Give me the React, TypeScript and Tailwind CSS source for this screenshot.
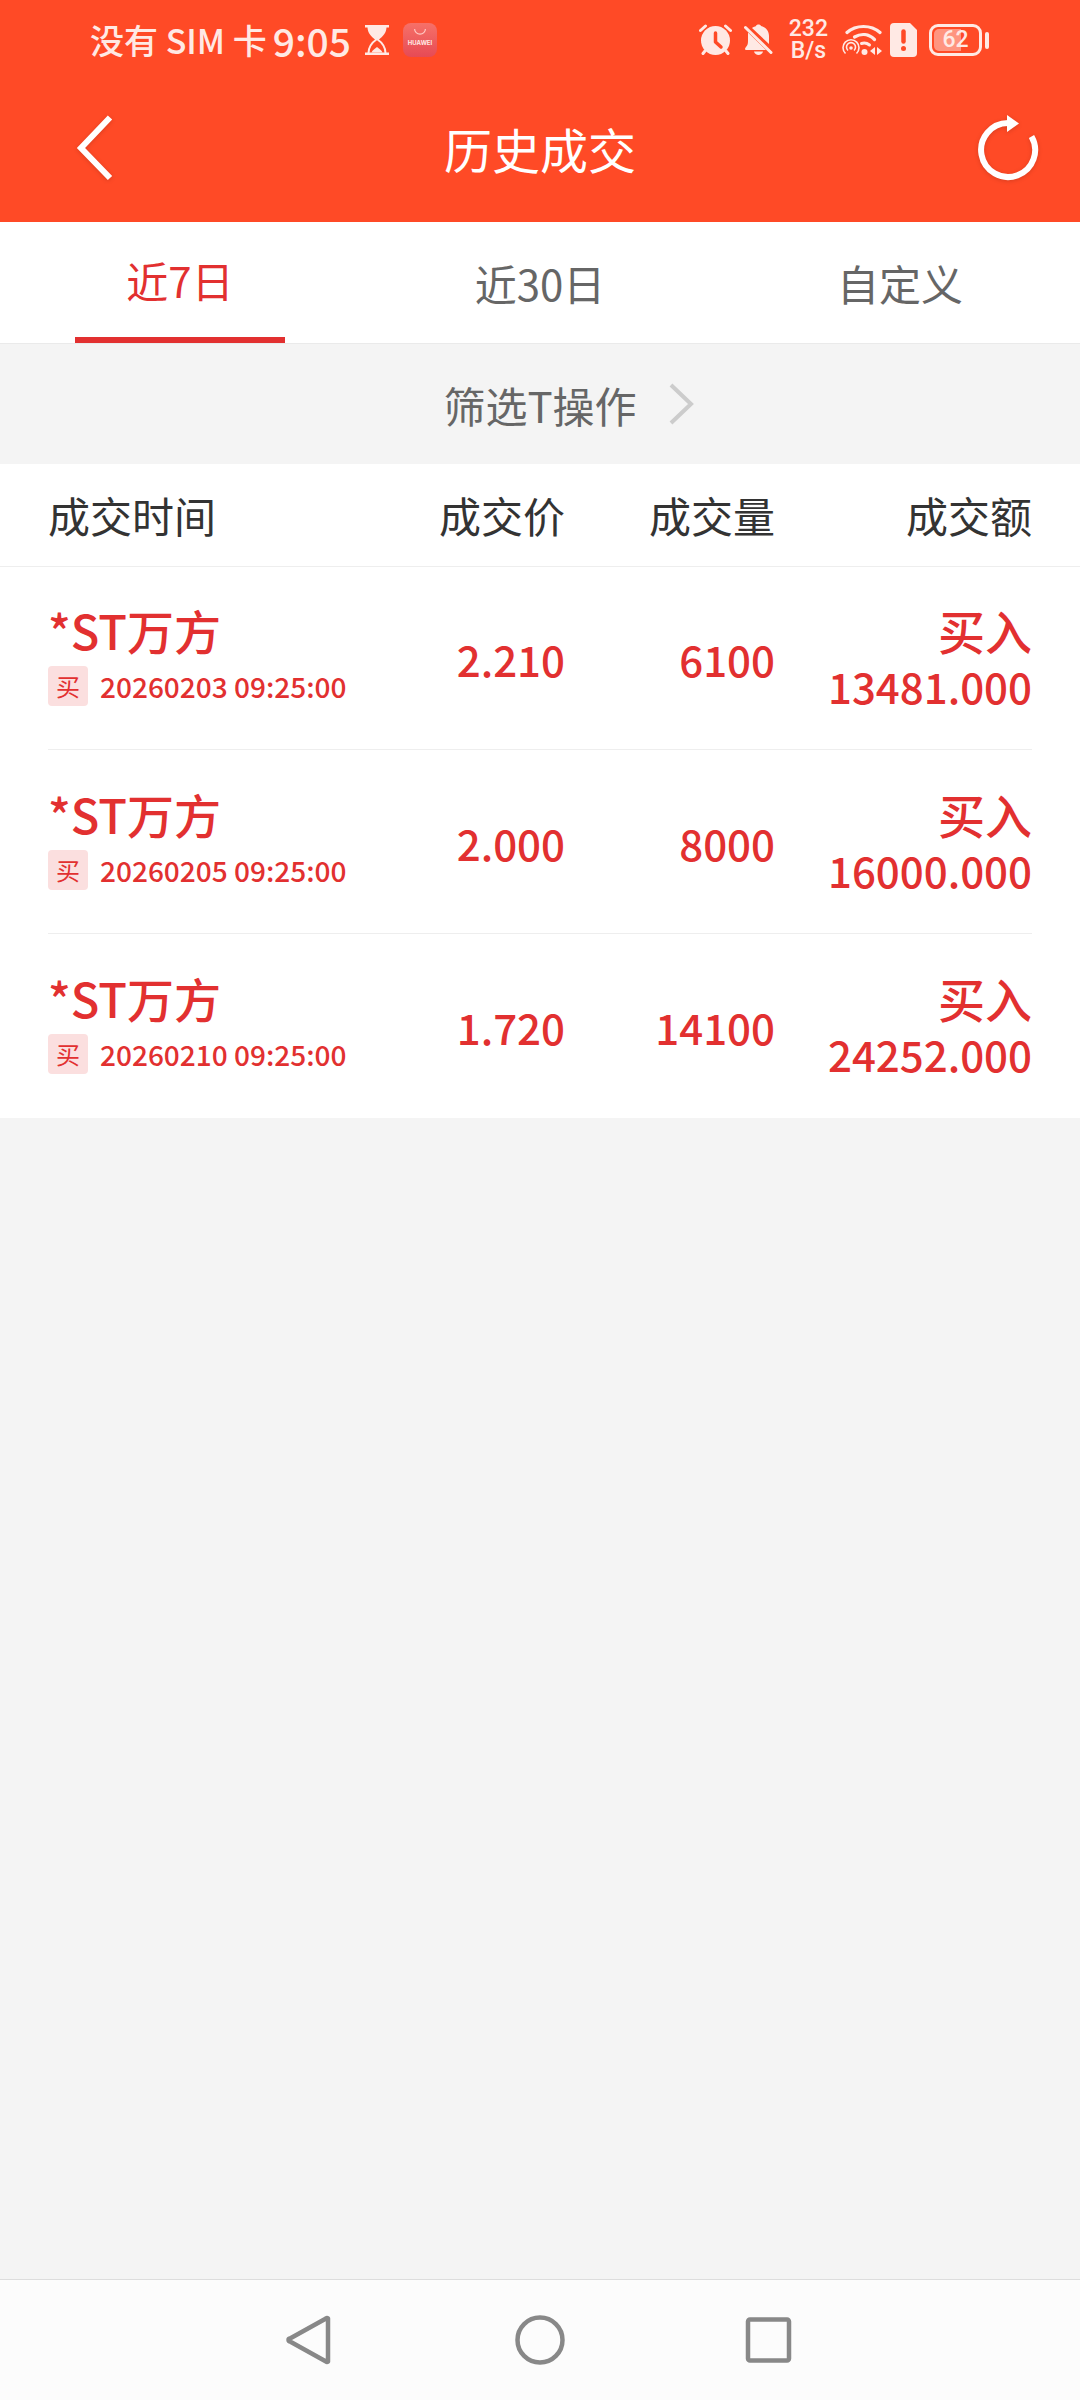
import { useState } from "react";

type Deal = {
  name: string;
  time: string;
  price: string;
  volume: string;
  amount: string;
};

const deals: Deal[] = [
  { name: "*ST万方", time: "20260203 09:25:00", price: "2.210", volume: "6100", amount: "13481.000" },
  { name: "*ST万方", time: "20260205 09:25:00", price: "2.000", volume: "8000", amount: "16000.000" },
  { name: "*ST万方", time: "20260210 09:25:00", price: "1.720", volume: "14100", amount: "24252.000" },
];

const tabs = ["近7日", "近30日", "自定义"];

function StatusBar() {
  return (
    <div className="flex h-20 items-center justify-between pr-[91px] pl-[90px] text-[#ffe9e4]">
      <div className="flex items-center font-medium">
        <span className="text-[34px] leading-10">没有 SIM 卡</span>
        <span className="ml-1.5 text-[39px] leading-10">9:05</span>
        <svg className="ml-3.5 h-[30px] w-6" viewBox="0 0 24 30" fill="none">
          <path d="M0 0h24v2.500H0zM0 27.500h24V30H0z" fill="currentColor" />
          <path d="M2.500 2h19c0 6-3.500 9-8 13h-3C6 11 2.500 8 2.500 2z" fill="currentColor" />
          <path d="M12 14c-5 3.500-8.500 7-8.500 14M12 14c5 3.500 8.500 7 8.500 14" stroke="currentColor" strokeWidth="2" />
          <path d="M6.500 27.500c1-2.500 3.500-3.500 5.500-5.500 2 2 4.500 3 5.500 5.500z" fill="currentColor" />
        </svg>
        <div className="ml-3.5 flex h-[34px] w-[34px] flex-col items-center rounded-lg bg-linear-to-b from-[#f67068] to-[#e64a55] pt-1.5">
          <svg className="h-1.5 w-3" viewBox="0 0 12 6" fill="none" stroke="#ffc9c4" strokeWidth="1.200">
            <path d="M.6 0a5.400 5.200 0 0 0 10.800 0" />
          </svg>
          <span className="mt-0.5 font-['Inter','Liberation_Sans',sans-serif] text-[6px] leading-3 font-bold">HUAWEI</span>
        </div>
      </div>

      <div className="flex items-center">
        {/* alarm */}
        <svg className="h-8 w-[33px]" viewBox="0 0 33 32" fill="none">
          <circle cx="16.500" cy="16.500" r="14.500" fill="currentColor" />
          <path d="M1.500 6.500l5-4.500M31.500 6.500l-5-4.500M6 27l-2 2.500M27 27l2 2.500" stroke="currentColor" strokeWidth="3" strokeLinecap="round" />
          <path d="M16.500 9v9l5.500 5" stroke="#ff4a26" strokeWidth="3.500" strokeLinecap="round" strokeLinejoin="round" />
        </svg>
        {/* muted bell */}
        <svg className="ml-3 h-8 w-[29px]" viewBox="0 0 29 32" fill="none">
          <path d="M8 4c1.500-1 3-1.500 4-2 .5-2 4.500-2 5 0 5 1.500 8 5 8 10v8zM4 8.500L22 26H1.500c-.8-1-.5-2 .5-3 1.500-1.500 2-3 2-6z" fill="currentColor" />
          <path d="M10 27.500h9c-1 4.500-8 4.500-9 0z" fill="currentColor" />
          <path d="M1.500 3.500L27 28.500" stroke="currentColor" strokeWidth="3" strokeLinecap="round" />
        </svg>
        <div className="ml-4 flex flex-col items-center font-['Roboto',sans-serif] text-[23px] leading-[22px] font-medium">
          <span>232</span>
          <span>B/s</span>
        </div>
        {/* wifi with hotspot */}
        <svg className="ml-3.5 h-8 w-10" viewBox="0 0 40 32" fill="none" stroke="currentColor">
          <path d="M5 8.500c9-8 24-8 33 0" strokeWidth="3.200" strokeLinecap="round" />
          <path d="M12.500 13c7-4 14.500-3 20 2.500" strokeWidth="3.200" strokeLinecap="round" />
          <path d="M19.500 19.500c3-1 5.500-.5 8 1.500" strokeWidth="3" strokeLinecap="round" />
          <path d="M3.500 29.500a8 8 0 1 1 11 0" strokeWidth="1.600" />
          <path d="M6 26.500a4.500 4.500 0 1 1 6 0" strokeWidth="1.600" />
          <circle cx="9" cy="24" r="1.800" fill="currentColor" stroke="none" />
          <circle cx="22.500" cy="28" r="3" fill="currentColor" stroke="none" />
          <path d="M33 23v8l-5-4zM35 23v8l5-4z" fill="currentColor" stroke="none" />
        </svg>
        {/* sim warning */}
        <svg className="ml-2 h-[34px] w-[27px]" viewBox="0 0 27 34">
          <path d="M4 0h16l7 7v23a4 4 0 0 1-4 4H4a4 4 0 0 1-4-4V4a4 4 0 0 1 4-4z" fill="currentColor" />
          <path d="M13.500 8.500v10" stroke="#ff4a26" strokeWidth="4.500" strokeLinecap="round" />
          <circle cx="13.500" cy="25.500" r="2.500" fill="#ff4a26" />
        </svg>
        <div className="ml-3 flex items-center gap-[3px]">
          <div className="h-8 w-[53px] rounded-[9px] border-[3px] border-current p-0.5">
            <div className="flex h-full items-center justify-center rounded-[5px] bg-linear-to-r from-[#ff9580] from-62% to-transparent to-62%">
              <span className="font-['Roboto',sans-serif] text-[23px] leading-6 font-medium">62</span>
            </div>
          </div>
          <div className="h-[17px] w-1 rounded-xs bg-current" />
        </div>
      </div>
    </div>
  );
}

function TitleBar() {
  return (
    <div className="flex h-[142px] items-center justify-between pr-10 pb-1.5 pl-[70px]">
      <button type="button" aria-label="返回" className="drop-shadow-sm">
        <svg className="h-[66px] w-11" viewBox="0 0 44 66" fill="none" stroke="#fff" strokeWidth="6">
          <path d="M40 2.500L11 33l29 30" />
        </svg>
      </button>
      <h1 className="text-5xl leading-[60px] text-white">历史成交</h1>
      <button type="button" aria-label="刷新" className="pl-3 drop-shadow-sm">
        <svg className="h-[66px] w-[62px]" viewBox="0 0 62 66" fill="none">
          <path d="M53.500 21.500A27 27 0 1 1 30 8" stroke="#fff" strokeWidth="6" />
          <path d="M29 0l12 8.500L29 17z" fill="#fff" />
        </svg>
      </button>
    </div>
  );
}

function DealRow({ deal }: { deal: Deal }) {
  return (
    <tr className="group relative h-46 text-[#e23030]">
      {/* the divider hangs off the first cell but spans the whole row */}
      <td className="pl-12 after:absolute after:inset-x-12 after:bottom-0 after:h-px after:bg-[#eeeeee] group-last:after:hidden">
        <div className="text-[47px] leading-[56px] font-medium">{deal.name}</div>
        <div className="mt-2 mb-2 flex items-center gap-3">
          <span className="flex h-10 w-10 shrink-0 items-center justify-center rounded bg-[#fbdfdf] text-2xl">买</span>
          <span className="text-[28px] leading-10 font-medium whitespace-nowrap">{deal.time}</span>
        </div>
      </td>
      <td className="text-right text-[42px] font-medium">{deal.price}</td>
      <td className="text-right text-[42px] font-medium">{deal.volume}</td>
      <td className="pr-12 text-right font-medium">
        <div className="text-[47px] leading-[56px]">买入</div>
        <div className="text-[42px] leading-[56px]">{deal.amount}</div>
      </td>
    </tr>
  );
}

export default function App() {
  const [active, setActive] = useState(0);

  return (
    <div className="flex min-h-screen flex-col bg-[#f4f4f4] font-['Noto_Sans_CJK_SC',sans-serif]">
      <header className="bg-[#ff4a26]">
        <StatusBar />
        <TitleBar />
      </header>

      <nav className="grid h-[122px] grid-cols-3 border-b border-[#eaeaea] bg-white">
        {tabs.map((tab, i) => (
          <button
            key={tab}
            type="button"
            onClick={() => setActive(i)}
            className={
              i === active
                ? "w-[210px] justify-self-center border-b-6 border-[#e23030] text-[42px] text-[#e23030]"
                : "w-[210px] justify-self-center text-[42px] text-[#666666]"
            }
          >
            {tab}
          </button>
        ))}
      </nav>

      <button type="button" className="grid h-[120px] grid-cols-[1fr_auto_1fr] items-center text-[42px] text-[#666666]">
        <span className="col-start-2">筛选T操作</span>
        <svg className="ml-8 h-[42px] w-[26px]" viewBox="0 0 26 42" fill="none" stroke="#cccccc" strokeWidth="4">
          <path d="M2 2l20 19L2 40" />
        </svg>
      </button>

      <table className="w-full table-fixed bg-white">
        <colgroup>
          <col />
          <col className="w-[198px]" />
          <col className="w-[210px]" />
          <col className="w-[305px]" />
        </colgroup>
        <thead>
          <tr className="h-[102px] border-b border-[#eeeeee] text-[42px] text-[#333333]">
            <th className="pl-12 text-left font-normal">成交时间</th>
            <th className="text-right font-normal">成交价</th>
            <th className="text-right font-normal">成交量</th>
            <th className="pr-12 text-right font-normal">成交额</th>
          </tr>
        </thead>
        <tbody>
          {deals.map((deal) => (
            <DealRow key={deal.time} deal={deal} />
          ))}
        </tbody>
      </table>

      <footer className="mt-auto flex h-[121px] items-center justify-center border-t border-[#dddddd] bg-[#fcfcfc]">
        <button type="button" aria-label="后退" className="flex w-[230px] justify-center">
          <svg className="h-[50px] w-[50px]" viewBox="0 0 50 50" fill="none" stroke="#888888" strokeWidth="4.500" strokeLinejoin="round">
            <path d="M43 3.500v43a1.500 1.500 0 0 1-2 0L5 26.500a1.500 1.500 0 0 1 0-3L41 3.500a1.500 1.500 0 0 1 2 0z" />
          </svg>
        </button>
        <button type="button" aria-label="主页" className="flex w-[230px] justify-center">
          <svg className="h-[50px] w-[50px]" viewBox="0 0 50 50" fill="none" stroke="#888888" strokeWidth="4.500">
            <circle cx="25" cy="25" r="22.500" />
          </svg>
        </button>
        <button type="button" aria-label="最近任务" className="flex w-[230px] justify-center">
          <svg className="h-[50px] w-[50px]" viewBox="0 0 50 50" fill="none" stroke="#888888" strokeWidth="4.500">
            <rect x="3" y="4.500" width="41" height="41" rx="2" />
          </svg>
        </button>
      </footer>
    </div>
  );
}
